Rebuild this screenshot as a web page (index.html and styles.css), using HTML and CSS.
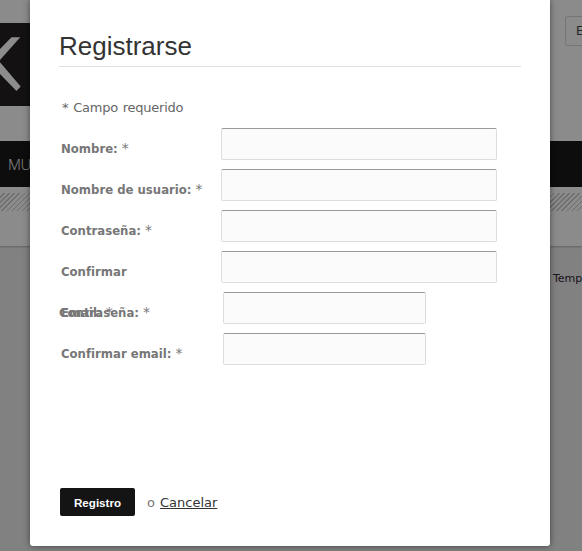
FILE: index.html
```
<!DOCTYPE html>
<html lang="es">
<head>
  <meta charset="UTF-8">
  <meta name="viewport" content="width=device-width, initial-scale=1.0">
  <title>Registrarse</title>
  <link rel="stylesheet" href="styles.css">
</head>
<body>
  <div class="page">
    <header class="site-header">
      <div class="top">
        <div class="logo">
          <svg width="30" height="83" viewBox="0 0 30 83">
            <path d="M11.500 14.300 H20.300 L-1 38 L20.700 63.500 L16.500 68 L0 51 V26 Z" fill="#fff"/>
          </svg>
        </div>
        <div class="lang">E</div>
      </div>
      <nav class="menu">MU</nav>
      <div class="stripes"></div>
    </header>
    <main class="content">
      <a class="season">Temp</a>
    </main>
  </div>

  <div class="overlay">
    <div class="modal">
      <h1>Registrarse</h1>
      <form>
        <p class="required">* Campo requerido</p>
        <div class="row">
          <label for="name">Nombre: <span>*</span></label>
          <input type="text" id="name">
        </div>
        <div class="row">
          <label for="username">Nombre de usuario: <span>*</span></label>
          <input type="text" id="username">
        </div>
        <div class="row">
          <label for="password">Contraseña: <span>*</span></label>
          <input type="password" id="password">
        </div>
        <div class="row">
          <label for="password2">Confirmar <b class="wrapped">Contraseña: <span>*</span></b></label>
          <input type="password" id="password2">
        </div>
        <div class="row short">
          <label for="email">Email: <span>*</span></label>
          <input type="text" id="email">
        </div>
        <div class="row short">
          <label for="email2">Confirmar email: <span>*</span></label>
          <input type="text" id="email2">
        </div>
        <div class="actions">
          <button type="submit">Registro</button>
          <span>o</span>
          <a href="#">Cancelar</a>
        </div>
      </form>
    </div>
  </div>
</body>
</html>
```
FILE: styles.css
```
* {
  box-sizing: border-box;
}
body {
  margin: 0;
  height: 551px;
  overflow: hidden;
  background: #ececec;
  font-family: "DejaVu Sans", Verdana, sans-serif;
  font-size: 13px;
  color: #666;
}

/* site behind the dialog */
.site-header {
  height: 246px;
  background: #fdfdfd;
  box-shadow: 0 1px 2px rgba(0, 0, 0, 0.25);
}
.top {
  display: flex;
  justify-content: space-between;
  height: 141px;
}
.logo {
  width: 30px;
  height: 83px;
  margin-top: 23px;
  background: #241f20;
}
.logo svg {
  display: block;
}
.lang {
  width: 17px;
  height: 30px;
  margin-top: 16px;
  padding-left: 10px;
  border: 1px solid #d8d8d8;
  border-right: 0;
  border-radius: 3px 0 0 3px;
  line-height: 28px;
  font-size: 12px;
  color: #444;
}
.menu {
  height: 46px;
  padding-left: 8px;
  background: #181818;
  color: #fff;
  font: 300 15px/46px "Open Sans", sans-serif;
  letter-spacing: -0.4px;
}
.stripes {
  height: 18px;
  margin-top: 6px;
  background: repeating-linear-gradient(135deg, #fdfdfd 0, #fdfdfd 2.6px, #c8c8c8 2.6px, #c8c8c8 3.6px);
}
.content {
  display: flex;
  justify-content: flex-end;
  padding-top: 25px;
}
.season {
  width: 29px;
  font-size: 11px;
  line-height: 15px;
  color: #332430;
}

.overlay {
  position: absolute;
  inset: 0;
  background: rgba(0, 0, 0, 0.45);
}
.modal {
  width: 520px;
  height: 546px;
  margin-left: 30px;
  padding: 29px 29px 0;
  background: #fff;
  border-radius: 0 0 3px 3px;
  box-shadow: 0 0 6px rgba(0, 0, 0, 0.5);
}
h1 {
  height: 38px;
  margin: 0;
  border-bottom: 1px solid #e0e0e0;
  font: 26px/35px "Liberation Sans", Arial, sans-serif;
  color: #333;
}
.required {
  margin: 0;
  padding: 32px 0 0 3px;
  height: 61px;
  line-height: 17px;
  letter-spacing: -0.24px;
  word-spacing: 1px;
}
.row {
  display: flex;
  height: 32px;
  margin-bottom: 9px;
}
label {
  position: relative;
  width: 162px;
  padding-left: 2px;
  line-height: 41px;
  font-family: "DejaVu Sans Condensed", "DejaVu Sans", sans-serif;
  font-stretch: condensed;
  font-size: 13px;
  font-weight: bold;
  color: #777;
}
label span {
  font-family: "DejaVu Sans", sans-serif;
  font-stretch: normal;
  font-size: 14px;
  font-weight: normal;
}
/* second line of the label runs into the next row */
.wrapped {
  position: absolute;
  left: 0;
  top: 41px;
}
input {
  width: 276px;
  height: 32px;
  border: 1px solid #ddd;
  border-top-color: #999;
  border-radius: 2px;
  background: #fbfbfb;
}
.short label {
  width: 164px;
}
.short input {
  width: 203px;
}
.actions {
  display: flex;
  align-items: center;
  margin: 123px 0 0 1px;
}
button {
  width: 75px;
  height: 28px;
  margin-right: 12px;
  padding: 0;
  border: 0;
  border-radius: 2px;
  background: #141414;
  color: #fff;
  font: bold 11.6px "Liberation Sans", Arial, sans-serif;
}
.actions span {
  color: #777;
}
.actions a {
  margin-left: 5px;
  color: #333;
}
```
